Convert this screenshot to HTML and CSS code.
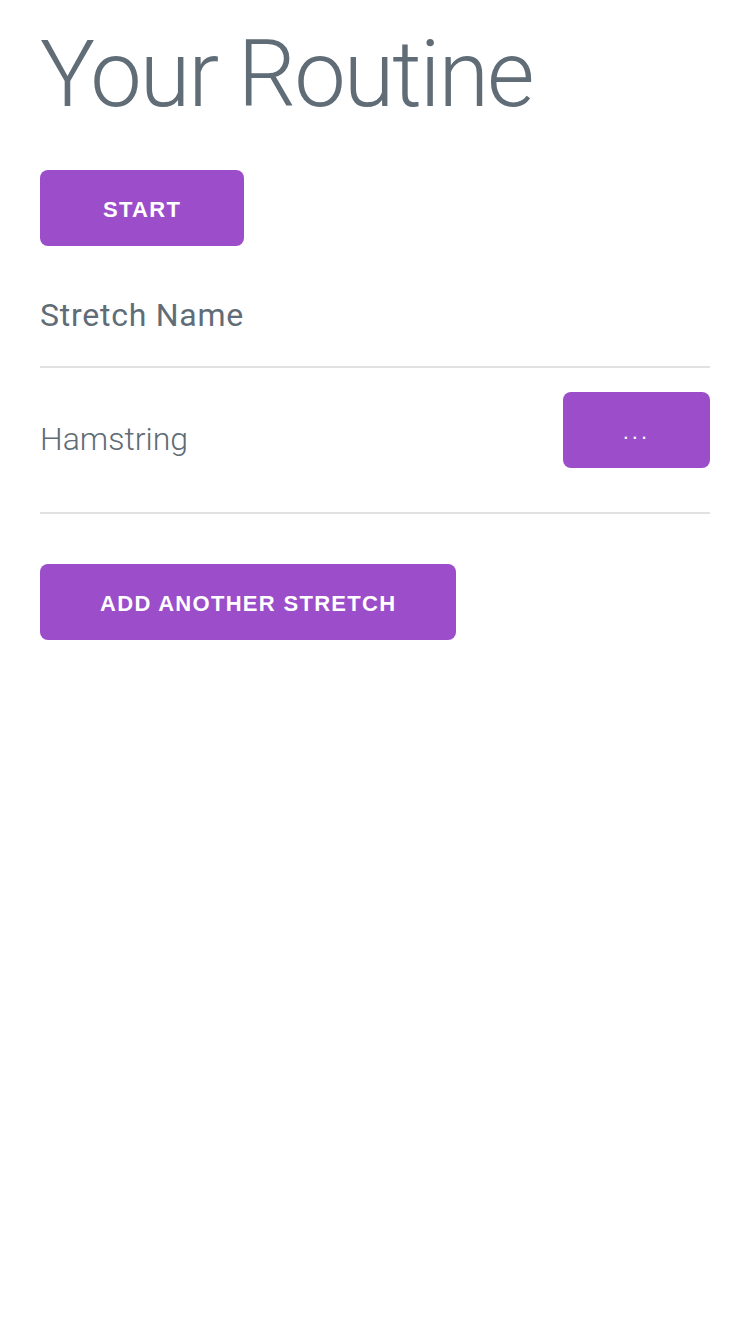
FILE: index.html
```html
<!DOCTYPE html>
<html>
<head>
<meta charset="utf-8">
<link rel="stylesheet" href="styles.css">
</head>
<body>
<div class="container">
  <h1 class="title">Your Routine</h1>
  <button class="btn btn-start">Start</button>
  <table class="routine">
    <thead>
      <tr><th>Stretch Name</th><th></th></tr>
    </thead>
    <tbody>
      <tr><td>Hamstring</td><td class="actions"><button class="btn">...</button></td></tr>
    </tbody>
  </table>
  <button class="btn">Add another stretch</button>
</div>
</body>
</html>
```
FILE: styles.css
```css
html, body {
  margin: 0;
  padding: 0;
  background: #fff;
}
body {
  font-family: Roboto, "Liberation Sans", sans-serif;
  font-size: 32px;
  font-weight: 300;
  line-height: 1.6;
  color: #606c76;
}
.container {
  padding: 20px 40px 0;
}
.title {
  margin: 0 0 40px;
  font-size: 92px;
  font-weight: 300;
  line-height: 1.2;
  letter-spacing: -2px;
  color: #606c76;
}
.btn {
  display: inline-block;
  box-sizing: border-box;
  height: 76px;
  padding: 4px 60px 0;
  margin: 0 0 20px;
  border: 0;
  border-radius: 8px;
  background: #9b4dca;
  color: #fff;
  font-family: "Liberation Sans", Arial, sans-serif;
  font-size: 22px;
  font-weight: 700;
  letter-spacing: 1.3px;
  line-height: 72px;
  text-transform: uppercase;
  white-space: nowrap;
  cursor: pointer;
}
.btn-start {
  padding-left: 63px;
  padding-right: 63px;
}
.routine {
  width: 100%;
  border-collapse: collapse;
  border-spacing: 0;
  margin-bottom: 50px;
}
.routine th, .routine td {
  padding: 24px 30px;
  border-bottom: 2px solid #e1e1e1;
  text-align: left;
  vertical-align: middle;
}
.routine th {
  font-weight: 400;
  letter-spacing: 0.75px;
}
.routine th:first-child, .routine td:first-child {
  padding-left: 0;
}
.routine th:last-child, .routine td:last-child {
  padding-right: 0;
}
.routine td.actions {
  text-align: right;
  width: 1%;
}
.routine td.actions .btn {
  display: block;
  font-weight: 400;
  letter-spacing: 3px;
}
```
